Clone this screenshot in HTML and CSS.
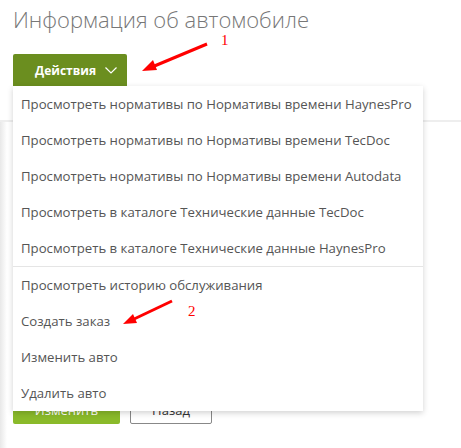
FILE: index.html
```html
<!DOCTYPE html>
<html lang="ru">
  <head>
    <meta charset="UTF-8" />
    <title>Информация об автомобиле</title>
    <link rel="stylesheet" href="styles.css">
  </head>
  <body>
    <h1>Информация об автомобиле</h1>

    <div class="actions">
      <button class="dropbtn">Действия
        <svg class="chevron" width="12" height="7" viewBox="0 0 12 7"><path d="M0.5 0.5 L6 6 L11.5 0.5" fill="none" stroke="#fff" stroke-width="1.2"/></svg>
      </button>

      <div class="dropdown-content">
        <a href="#">Просмотреть нормативы по Нормативы времени HaynesPro</a>
        <a href="#">Просмотреть нормативы по Нормативы времени TecDoc</a>
        <a href="#">Просмотреть нормативы по Нормативы времени Autodata</a>
        <a href="#">Просмотреть в каталоге Технические данные TecDoc</a>
        <a href="#">Просмотреть в каталоге Технические данные HaynesPro</a>
        <div class="divider"></div>
        <a href="#">Просмотреть историю обслуживания</a>
        <a href="#">Создать заказ</a>
        <a href="#">Изменить авто</a>
        <a href="#">Удалить авто</a>
      </div>

      <!-- annotations -->
      <svg class="note" width="461" height="448" viewBox="0 0 461 448">
        <line x1="207" y1="44" x2="152" y2="67" stroke="#f00" stroke-width="3"/>
        <polygon points="142,71 153,60 157,70" fill="#f00"/>
        <text x="221" y="45" fill="#f00" font-family="Liberation Serif" font-size="15">1</text>
        <line x1="172" y1="301" x2="132" y2="320" stroke="#f00" stroke-width="3"/>
        <polygon points="123,324 133,314 137,323" fill="#f00"/>
        <text x="188" y="316" fill="#f00" font-family="Liberation Serif" font-size="15">2</text>
      </svg>
    </div>

    <div class="tabs"></div>

    <div class="panel">
      <div class="edge"></div>
      <div class="panel-body">
        <div class="form-buttons">
          <button class="btn-save">Изменить</button>
          <button class="btn-back">Назад</button>
        </div>
      </div>
    </div>
  </body>
</html>
```

FILE: styles.css
```css
body {
  background-color: white;
  color: #555;
  font-family: "Open Sans", sans-serif;
  margin: 0;
  padding: 0;
  width: 461px;
  height: 448px;
  overflow: hidden;
}

h1 {
  margin: 0;
  padding: 6px 0 0 13px;
  height: 54px;
  box-sizing: border-box;
  font-weight: 300;
  font-size: 22px;
  line-height: 26px;
  color: #777;
  letter-spacing: 0;
}

.actions {
  position: relative;
  padding-left: 13px;
  height: 32px;
}

.dropbtn {
  display: flex;
  align-items: center;
  gap: 9px;
  height: 32px;
  width: 114px;
  padding: 0 0 0 22px;
  background-color: #6b8e1f;
  color: white;
  border: none;
  border-radius: 2px 2px 0 0;
  font-family: "Open Sans", sans-serif;
  font-weight: 700;
  font-size: 12px;
  cursor: pointer;
}

.dropdown-content {
  position: absolute;
  top: 32px;
  left: 13px;
  width: 410px;
  background-color: white;
  box-shadow: 0 2px 6px rgba(0, 0, 0, 0.18);
  z-index: 2;
}

.dropdown-content a {
  display: block;
  height: 36px;
  line-height: 36px;
  padding-left: 8px;
  color: #555;
  text-decoration: none;
  font-size: 13.2px;
  white-space: nowrap;
}

.dropdown-content a:hover {
  background-color: #f5f5f5;
}

.divider {
  height: 1px;
  background-color: #e5e5e5;
}

.note {
  position: absolute;
  top: -54px;
  left: 0;
  z-index: 3;
  pointer-events: none;
}

.tabs {
  height: 36px;
  box-sizing: border-box;
  border-bottom: 2px solid #eee;
}

.panel {
  display: flex;
  height: 326px;
}

.edge {
  width: 7px;
  background: linear-gradient(to right, #e8e8e8, #fff);
}

.panel-body {
  flex: 1;
  display: flex;
  flex-direction: column;
  justify-content: flex-end;
  padding-left: 6px;
}

.form-buttons {
  display: flex;
  gap: 10px;
  margin-bottom: 24px;
}

.form-buttons button {
  height: 28px;
  font-family: "Open Sans", sans-serif;
  font-size: 13px;
  border-radius: 2px;
}

.btn-save {
  width: 107px;
  background-color: #8aba2a;
  color: white;
  border: none;
}

.btn-back {
  width: 82px;
  background-color: white;
  color: #333;
  border: 1px solid #888;
}
```
